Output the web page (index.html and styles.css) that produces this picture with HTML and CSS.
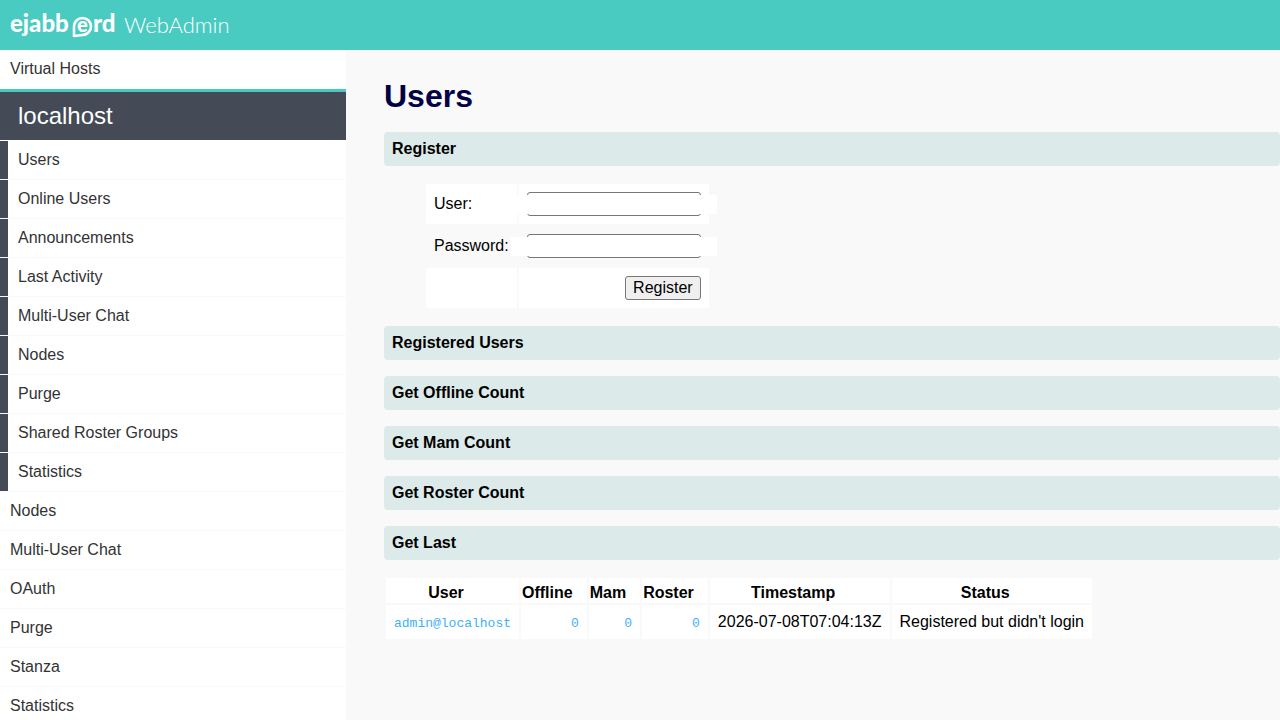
FILE: index.html
```html
<!DOCTYPE html>
<html lang="en">
<head>
    <meta charset="utf-8">
    <title>ejabberd Web Admin</title>
    <meta name="viewport" content="width=device-width, initial-scale=1">
    <link rel="stylesheet" href="styles.css">
</head>
<body>
    <header class="header">
        <a class="logo" href="#" aria-label="ejabberd WebAdmin">
            <svg width="240" height="30" viewBox="0 0 240 30">
                <text class="brand" x="0" y="22">ejabb</text>
                <path d="M64 26V16.500A8.500 8.500 0 1 1 72.500 25Z" fill="none" stroke="#fff" stroke-width="2.600" stroke-linejoin="round"/>
                <text class="brand-e" x="67" y="22">e</text>
                <text class="brand" x="83" y="22">rd</text>
                <text class="product" x="114" y="23">WebAdmin</text>
            </svg>
        </a>
    </header>
    <div class="container">
        <nav class="navigation">
            <ul>
                <li><a href="#">Virtual Hosts</a></li>
                <li class="navhead"><a href="#">localhost</a></li>
                <li class="navsub"><a href="#">Users</a></li>
                <li class="navsub"><a href="#">Online Users</a></li>
                <li class="navsub"><a href="#">Announcements</a></li>
                <li class="navsub"><a href="#">Last Activity</a></li>
                <li class="navsub"><a href="#">Multi-User Chat</a></li>
                <li class="navsub"><a href="#">Nodes</a></li>
                <li class="navsub"><a href="#">Purge</a></li>
                <li class="navsub"><a href="#">Shared Roster Groups</a></li>
                <li class="navsub"><a href="#">Statistics</a></li>
                <li><a href="#">Nodes</a></li>
                <li><a href="#">Multi-User Chat</a></li>
                <li><a href="#">OAuth</a></li>
                <li><a href="#">Purge</a></li>
                <li><a href="#">Stanza</a></li>
                <li><a href="#">Statistics</a></li>
            </ul>
        </nav>
        <main class="content">
            <h1>Users</h1>
            <h3>Register</h3>
            <form>
                <table class="register">
                    <tr>
                        <td><label for="user">User:</label></td>
                        <td class="field"><input type="text" id="user" name="user"></td>
                    </tr>
                    <tr>
                        <td><label for="password">Password:</label></td>
                        <td class="field"><input type="password" id="password" name="password"></td>
                    </tr>
                    <tr>
                        <td></td>
                        <td class="alignright"><button type="submit">Register</button></td>
                    </tr>
                </table>
            </form>
            <h3>Registered Users</h3>
            <h3>Get Offline Count</h3>
            <h3>Get Mam Count</h3>
            <h3>Get Roster Count</h3>
            <h3>Get Last</h3>
            <table class="sortable">
                <thead>
                    <tr>
                        <th>User</th>
                        <th>Offline</th>
                        <th>Mam</th>
                        <th>Roster</th>
                        <th>Timestamp</th>
                        <th>Status</th>
                    </tr>
                </thead>
                <tbody>
                    <tr>
                        <td><a href="#">admin@localhost</a></td>
                        <td class="alignright"><a href="#">0</a></td>
                        <td class="alignright"><a href="#">0</a></td>
                        <td class="alignright"><a href="#">0</a></td>
                        <td>2026-07-08T07:04:13Z</td>
                        <td>Registered but didn't login</td>
                    </tr>
                </tbody>
            </table>
        </main>
    </div>
</body>
</html>
```
FILE: styles.css
```css
html, body {
    margin: 0;
    padding: 0;
}

body {
    min-height: 100vh;
    background: #f9f9f9;
    color: #000;
    font-family: "Liberation Sans", Helvetica, Arial, sans-serif;
    font-size: 16px;
    line-height: 18px;
}

a {
    text-decoration: none;
}

.header {
    height: 50px;
    background: #49cbc1;
}

.logo {
    display: inline-block;
    padding: 10px;
}

.logo svg {
    display: block;
    overflow: visible;
}

.brand, .brand-e {
    font-family: Lato, sans-serif;
    font-size: 24px;
    font-weight: 900;
    fill: #fff;
}

.brand-e {
    font-size: 20px;
}

.product {
    font-family: Lato, sans-serif;
    font-size: 22px;
    font-weight: 300;
    fill: #fff;
}

.container {
    display: flex;
    align-items: flex-start;
}

.navigation {
    width: 27%;
    background: #fff;
}

.navigation ul {
    list-style: none;
    margin: 0;
    padding: 0;
}

.navigation a {
    display: block;
    padding: 10px;
    border-bottom: 1px solid #f9f9f9;
    color: #333;
}

.navigation .navhead a {
    padding: 12px 18px;
    border-top: 3px solid #49cbc1;
    border-bottom-color: #fff;
    background: #444a56;
    background-clip: padding-box;
    color: #fff;
    font-size: 24px;
    line-height: 24px;
}

.navsub {
    background: linear-gradient(#444a56, #444a56) left top / 8px calc(100% - 1px) no-repeat;
}

.navigation .navsub a {
    padding-left: 18px;
}

.content {
    flex: 1;
    margin-left: 3%;
}

h1 {
    margin: 28px 0 18px;
    color: #000044;
    font-size: 32px;
    line-height: 36px;
}

h3 {
    margin: 0 0 16px;
    padding: 8px;
    border-radius: 4px;
    background: #dcebe9;
    font-size: 16px;
}

table {
    border-spacing: 2px;
}

td {
    padding: 8px;
}

tr:nth-child(odd) td, th {
    background: #fff;
}

.alignright {
    text-align: right;
}

.register {
    margin: 0 0 16px 40px;
}

.field {
    position: relative;
}

/* white strip across the whole field */
.field::after {
    content: "";
    position: absolute;
    top: 11px;
    left: -8px;
    right: -8px;
    height: 19px;
    background: #fff;
    pointer-events: none;
}

input, button {
    display: inline-block;
    box-sizing: border-box;
    height: 24px;
    border: 1px solid #767676;
    border-radius: 3px;
    font: inherit;
    vertical-align: top;
}

input {
    width: 174px;
    padding: 2px;
    background: #fff;
}

button {
    padding: 1px 7px;
    background: #efefef;
    color: #000;
}

.sortable th {
    padding: 6px 14px 1px 1px;
}

.sortable td {
    white-space: nowrap;
}

.sortable a {
    color: #3eaffa;
    font-family: "Liberation Mono", "Courier New", monospace;
    font-size: 13px;
    line-height: 13px;
}
```
